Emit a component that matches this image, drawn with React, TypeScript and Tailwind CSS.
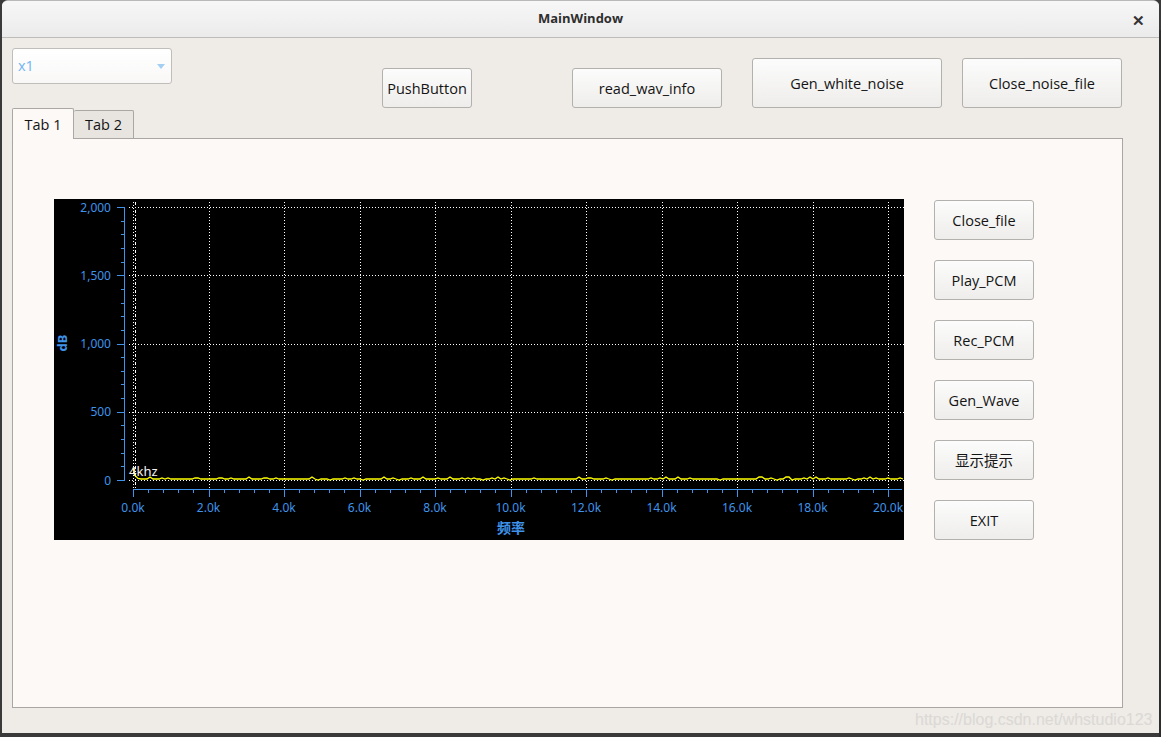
import React from "react";

const UI = { fontFamily: '"Open Sans", "Noto Sans", "Noto Sans CJK SC", sans-serif' };
const CHART_FONT = '"Noto Sans", "DejaVu Sans", "Noto Sans CJK SC", sans-serif';

function Btn({ label, className }: { label: string; className: string }) {
  return (
    <button
      className={
        "flex items-center justify-center rounded-[3px] border border-[#b3b1ae] bg-gradient-to-b from-[#fcfcfc] to-[#eeedeb] pt-px text-[14.5px] text-[#141414] " +
        className
      }
      style={UI}
    >
      {label}
    </button>
  );
}

function makeTrace(): string {
  let seed = 12345;
  const rnd = () => {
    seed = (seed * 1103515245 + 12345) % 2147483648;
    return seed / 2147483648;
  };
  const pts: string[] = [];
  pts.push("79,268.5");
  pts.push("81,276.5");
  pts.push("84,279.5");
  for (let x = 87; x <= 850; x += 3) {
    const r = rnd();
    let y = 280;
    if (r > 0.8) y = 279;
    if (r > 0.93) y = 278;
    if (r < 0.06) y = 281;
    pts.push(`${x},${y}`);
  }
  return pts.join(" ");
}

const TRACE = makeTrace();

function Chart() {
  const blue = "#3f93ea";
  const yFor = (v: number) => 281 - (v / 2000) * 273;
  const xFor = (hz: number) => 79 + (hz / 2000) * 75.5;
  const yMajors = [0, 500, 1000, 1500, 2000];
  const yMinors: number[] = [];
  for (let v = 0; v <= 2000; v += 100) if (v % 500 !== 0) yMinors.push(v);
  const xMajors: number[] = [];
  for (let h = 0; h <= 20000; h += 2000) xMajors.push(h);
  const xMinors: number[] = [];
  for (let h = 400; h < 20400; h += 400) if (h % 2000 !== 0) xMinors.push(h);
  const fmtY = (v: number) => (v >= 1000 ? `${Math.floor(v / 1000)},${String(v % 1000).padStart(3, "0")}` : `${v}`);

  return (
    <div className="h-[341px] w-[850px] shrink-0 bg-black">
      <svg width="850" height="341" viewBox="0 0 850 341">
        {yMajors.map((v) => (
          <line key={"hg" + v} x1="75" x2="850" y1={Math.round(yFor(v)) + 0.5} y2={Math.round(yFor(v)) + 0.5} stroke="#fff" strokeWidth="1" strokeDasharray="1 2" />
        ))}
        {xMajors.map((h) => (
          <line key={"vg" + h} x1={Math.round(xFor(h)) + 0.5} x2={Math.round(xFor(h)) + 0.5} y1="3" y2="290" stroke="#fff" strokeWidth="1" strokeDasharray="1 2" />
        ))}
        <line x1="81.5" x2="81.5" y1="3" y2="290" stroke="#fff" strokeWidth="1" strokeDasharray="3 2 1 2" />
        <line x1="70.5" x2="70.5" y1={yFor(2000)} y2={yFor(0) + 1} stroke={blue} strokeWidth="1" />
        {yMajors.map((v) => (
          <line key={"ym" + v} x1="63" x2="71" y1={Math.round(yFor(v)) + 0.5} y2={Math.round(yFor(v)) + 0.5} stroke={blue} strokeWidth="1" />
        ))}
        {yMinors.map((v) => (
          <line key={"yn" + v} x1="67" x2="71" y1={Math.round(yFor(v)) + 0.5} y2={Math.round(yFor(v)) + 0.5} stroke={blue} strokeWidth="1" />
        ))}
        {yMajors.map((v) => (
          <text key={"yl" + v} x="57" y={yFor(v) + 4.5} textAnchor="end" fill={blue} fontSize="12" fontFamily={CHART_FONT}>
            {fmtY(v)}
          </text>
        ))}
        <text
          x="8"
          y="144"
          transform="rotate(-90 8 144)"
          textAnchor="middle"
          dominantBaseline="central"
          fill={blue}
          fontSize="13"
          fontWeight="bold"
          fontFamily={CHART_FONT}
        >
          dB
        </text>
        <line x1="79" x2="848" y1="290.5" y2="290.5" stroke={blue} strokeWidth="1" />
        {xMajors.map((h) => (
          <line key={"xm" + h} x1={Math.round(xFor(h)) + 0.5} x2={Math.round(xFor(h)) + 0.5} y1="290" y2="298" stroke={blue} strokeWidth="1" />
        ))}
        {xMinors.map((h) => (
          <line key={"xn" + h} x1={Math.round(xFor(h)) + 0.5} x2={Math.round(xFor(h)) + 0.5} y1="290" y2="294" stroke={blue} strokeWidth="1" />
        ))}
        {xMajors.map((h) => (
          <text key={"xl" + h} x={xFor(h)} y="313" textAnchor="middle" fill={blue} fontSize="12" fontFamily={CHART_FONT}>
            {(h / 1000).toFixed(1)}k
          </text>
        ))}
        <text x="457" y="334" textAnchor="middle" fill={blue} fontSize="14" fontWeight="bold" fontFamily={CHART_FONT}>
          频率
        </text>
        <polyline points={TRACE} fill="none" stroke="#ffff00" strokeWidth="1.3" />
        <text x="75" y="277" fill="#f4f4f4" fontSize="13" fontFamily={CHART_FONT}>
          4khz
        </text>
      </svg>
    </div>
  );
}

export default function App() {
  return (
    <div className="relative h-[737px] w-[1161px] overflow-hidden bg-[#3a3a3a]" style={UI}>
      <div className="ml-[2px] flex h-[733px] w-[1157px] flex-col overflow-hidden rounded-t-[6px] border-t border-[#b9b9b9] bg-[#efece8]">
        <div className="relative flex h-[37px] shrink-0 items-center justify-center border-b border-[#bdbcba] bg-gradient-to-b from-[#f7f7f7] to-[#ebebeb]">
          <span className="text-[13px] font-bold text-[#2e2e2e]">MainWindow</span>
          <span className="absolute right-[14px] top-[8px] text-[15px] font-bold text-[#333]">✕</span>
        </div>
        <div className="flex h-[70px] shrink-0 items-end pl-[10px]">
          <div className="mb-[24px] flex h-[36px] w-[160px] items-center justify-between self-end rounded-[3px] border border-[#c0bebb] bg-gradient-to-b from-[#ffffff] to-[#f9f8f7] pl-[5px] pr-[6px]">
            <span className="text-[14.5px] text-[#72b4f4]">x1</span>
            <svg width="8" height="5" viewBox="0 0 8 5">
              <polygon points="0,0 8,0 4,5" fill="#a3cff5" />
            </svg>
          </div>
          <Btn label="PushButton" className="ml-[210px] h-[40px] w-[90px]" />
          <Btn label="read_wav_info" className="ml-[100px] h-[40px] w-[150px]" />
          <Btn label="Gen_white_noise" className="ml-[30px] h-[50px] w-[190px]" />
          <Btn label="Close_noise_file" className="ml-[20px] h-[50px] w-[160px]" />
        </div>
        <div className="flex h-[30px] shrink-0 items-end pl-[10px]">
          <div className="relative z-10 -mb-px flex h-[31px] w-[62px] items-center justify-center rounded-t-[2px] border border-b-0 border-[#aaa8a5] bg-[#fcf9f6] pt-px text-[14.5px] text-[#141414]">
            Tab 1
          </div>
          <div className="flex h-[28px] w-[60px] items-center justify-center rounded-t-[2px] border border-l-0 border-b-0 border-[#aaa8a5] bg-[#e8e5e1] pt-px text-[14.5px] text-[#141414]">
            Tab 2
          </div>
        </div>
        <div className="ml-[10px] flex h-[570px] w-[1111px] shrink-0 items-start border border-[#a9a7a4] bg-[#fcf9f6] pl-[41px] pt-[60px]">
          <Chart />
          <div className="ml-[30px] mt-px flex flex-col gap-[20px]">
            <Btn label="Close_file" className="h-[40px] w-[100px]" />
            <Btn label="Play_PCM" className="h-[40px] w-[100px]" />
            <Btn label="Rec_PCM" className="h-[40px] w-[100px]" />
            <Btn label="Gen_Wave" className="h-[40px] w-[100px]" />
            <Btn label="显示提示" className="h-[40px] w-[100px]" />
            <Btn label="EXIT" className="h-[40px] w-[100px]" />
          </div>
        </div>
      </div>
      <div className="absolute right-0 top-[30px] h-[707px] w-[2px] bg-[#2d2d2d]" />
      <div
        className="absolute left-[915px] top-[708px] text-[16px] text-[#dcd9d5]"
        style={{ fontFamily: '"Liberation Sans", Arial, sans-serif', textShadow: "0 0 1px #e9e6e2" }}
      >
        https://blog.csdn.net/whstudio123
      </div>
    </div>
  );
}
